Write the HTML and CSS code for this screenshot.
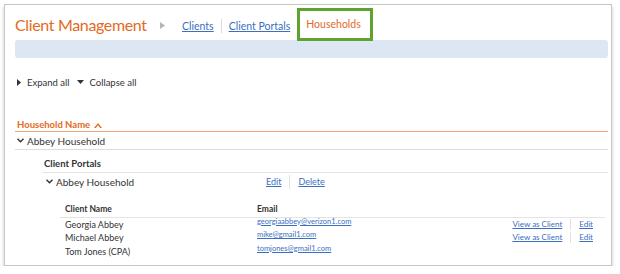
FILE: index.html
```html
<!DOCTYPE html>
<html lang="en">
<head>
  <meta charset="UTF-8" />
  <title>Client Management - Households</title>
  <link rel="stylesheet" href="styles.css">
</head>
<body>
  <div class="frame">
    <header class="top">
      <h1>Client Management</h1>
      <svg class="crumb" width="5" height="7" viewBox="0 0 5 7"><path d="M0 0 L5 3.5 L0 7 Z" fill="#b5b5b5"/></svg>
      <nav class="tabs">
        <a href="#">Clients</a>
        <span class="sep"></span>
        <a href="#">Client Portals</a>
        <span class="current">Households</span>
      </nav>
    </header>
    <div class="bar"></div>

    <div class="toggles">
      <svg width="4" height="7" viewBox="0 0 4 7"><path d="M0 0 L4 3.5 L0 7 Z" fill="#333"/></svg>
      <span>Expand all</span>
      <svg width="7" height="4" viewBox="0 0 7 4"><path d="M0 0 L7 0 L3.5 4 Z" fill="#333"/></svg>
      <span>Collapse all</span>
    </div>

    <div class="grid-head">
      Household Name
      <svg width="8" height="5" viewBox="0 0 8 5"><path d="M0 5 L4 0 L8 5 L6.2 5 L4 2.3 L1.8 5 Z" fill="#e46c24"/></svg>
    </div>
    <div class="row">
      <svg class="chev" width="7" height="5" viewBox="0 0 7 5"><path d="M0.5 0.8 L3.5 3.8 L6.5 0.8" fill="none" stroke="#333" stroke-width="1.4"/></svg>
      Abbey Household
    </div>

    <h2>Client Portals</h2>
    <div class="portal">
      <div class="portal-row">
        <span class="name">
          <svg class="chev" width="7" height="5" viewBox="0 0 7 5"><path d="M0.5 0.8 L3.5 3.8 L6.5 0.8" fill="none" stroke="#333" stroke-width="1.4"/></svg>
          Abbey Household
        </span>
        <span class="actions">
          <a href="#">Edit</a>
          <span class="sep"></span>
          <a href="#">Delete</a>
        </span>
      </div>

      <table class="clients">
        <thead>
          <tr><th>Client Name</th><th>Email</th><th></th></tr>
        </thead>
        <tbody>
          <tr>
            <td>Georgia Abbey</td>
            <td><a class="mail" href="#">georgiaabbey@verizon1.com</a></td>
            <td class="links"><a href="#">View as Client</a><span class="sep"></span><a href="#">Edit</a></td>
          </tr>
          <tr>
            <td>Michael Abbey</td>
            <td><a class="mail" href="#">mike@gmail1.com</a></td>
            <td class="links"><a href="#">View as Client</a><span class="sep"></span><a href="#">Edit</a></td>
          </tr>
          <tr>
            <td>Tom Jones (CPA)</td>
            <td><a class="mail" href="#">tomjones@gmail1.com</a></td>
            <td class="links"></td>
          </tr>
          <tr class="cut">
            <td></td>
            <td><span class="faded"></span></td>
            <td></td>
          </tr>
        </tbody>
      </table>
    </div>
  </div>
</body>
</html>
```

FILE: styles.css
```css
:root {
  --orange: #e36a26;
  --blau: #3a6fc2;
  --text: #333333;
  --linie: #dddddd;
}

* {
  box-sizing: border-box;
  margin: 0;
  padding: 0;
}

body {
  font-family: Lato, 'Open Sans', sans-serif;
  background: #ffffff;
  color: var(--text);
}

a {
  color: var(--blau);
}

.frame {
  margin: 4px 0 0 4px;
  width: 608px;
  height: 262px;
  border: 1px solid #c6c6c6;
  box-shadow: 0 3px 4px rgba(0, 0, 0, 0.22);
  padding: 0 3px 0 10px;
  overflow: hidden;
}

.top {
  display: flex;
  align-items: center;
  height: 36px;
  padding-top: 3px;
}

h1 {
  font-size: 16px;
  font-weight: normal;
  color: var(--orange);
  letter-spacing: -0.35px;
  width: 145px;
  white-space: nowrap;
}

.crumb {
  margin: 2px 0 0 0;
}

.tabs {
  display: flex;
  align-items: center;
  margin-left: 17px;
  font-size: 10.5px;
}

.tabs a {
  margin-top: 2px;
}

.tabs .sep {
  width: 1px;
  height: 14px;
  background: #dcdcdc;
  margin: 2px 7px 0;
}

.tabs .current {
  display: block;
  color: var(--orange);
  border: 3px solid #5fa22e;
  padding: 7px 9px 7px 6px;
  margin-left: 7px;
  line-height: 13px;
}

.bar {
  height: 18px;
  margin-top: -1px;
  background: #dce7f3;
  border-radius: 3px;
}

.toggles {
  display: flex;
  align-items: center;
  gap: 6px;
  margin: 17px 0 0 2px;
  font-size: 9.5px;
  height: 14px;
}

.toggles span {
  margin-right: 1px;
}

.grid-head {
  margin-top: 28px;
  padding: 2px 0 0 2px;
  font-size: 9.5px;
  font-weight: bold;
  color: var(--orange);
  height: 15px;
  line-height: 12px;
  border-bottom: 1px solid #efa677;
}

.grid-head svg {
  margin-left: 2px;
}

.row {
  height: 18px;
  display: flex;
  align-items: center;
  gap: 3px;
  padding-left: 2px;
  font-size: 10px;
  border-bottom: 1px solid var(--linie);
}

h2 {
  font-size: 9.5px;
  font-weight: bold;
  margin-left: 29px;
  height: 22px;
  padding-top: 7px;
  line-height: 14px;
}

.portal {
  margin-left: 27px;
  border-top: 1px solid #e4e4e4;
}

.portal-row {
  display: flex;
  align-items: center;
  height: 17px;
  font-size: 10px;
  padding-left: 4px;
}

.portal-row .name {
  display: flex;
  align-items: center;
  gap: 3px;
  width: 220px;
}

.actions {
  display: flex;
  align-items: center;
  font-size: 9px;
}

.actions .sep {
  display: inline-block;
  width: 1px;
  height: 14px;
  background: #e2e2e2;
  margin: 0 8px;
}

.clients {
  margin: 14px 0 0 18px;
  width: 545px;
  border-collapse: collapse;
  font-size: 9px;
}

.clients th {
  text-align: left;
  font-weight: bold;
  font-size: 8.5px;
  height: 13px;
  line-height: 11px;
  border-bottom: 1px solid #e4e4e4;
  vertical-align: top;
}

.clients th:first-child,
.clients td:first-child {
  padding-left: 5px;
  width: 197px;
}

.clients td {
  height: 13.5px;
  line-height: 13.5px;
  vertical-align: top;
}

.mail {
  display: inline-block;
  font-size: 7.5px;
  line-height: 10px;
  vertical-align: top;
  position: relative;
  top: -1px;
}

.links {
  text-align: right;
  padding-right: 12px;
  white-space: nowrap;
  font-size: 8px;
}

.links .sep {
  display: inline-block;
  width: 1px;
  height: 11px;
  background: #e2e2e2;
  margin: 1px 8px 0;
  vertical-align: top;
}

.faded {
  display: inline-block;
  width: 90px;
  border-bottom: 1px dotted #c9d3e3;
}
```
